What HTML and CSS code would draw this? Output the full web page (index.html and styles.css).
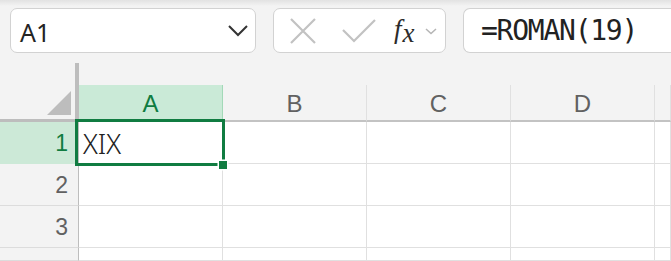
FILE: index.html
```html
<!DOCTYPE html>
<html lang="en">
<head>
  <meta charset="UTF-8" />
  <meta name="viewport" content="width=device-width, initial-scale=1" />
  <title>ROMAN</title>
  <link rel="stylesheet" href="styles.css">
</head>
<body>
  <div class="toolbar">
    <div class="namebox">
      <span class="ref">A1</span>
      <svg class="chev" width="22" height="14" viewBox="0 0 22 14"><path d="M2 2 L11 11 L20 2" /></svg>
    </div>
    <div class="fxbtns">
      <svg class="btn-x" width="26" height="26" viewBox="0 0 26 26"><path d="M1 1 L25 25 M25 1 L1 25" /></svg>
      <svg class="btn-ok" width="34" height="24" viewBox="0 0 34 24"><path d="M1 11 L12 22 L33 1" /></svg>
      <span class="fx">f<span class="fx-x">x</span></span>
      <svg class="chev-sm" width="12" height="7" viewBox="0 0 12 7"><path d="M1 1 L6 5.5 L11 1" /></svg>
    </div>
    <div class="formula">=ROMAN(19)</div>
  </div>

  <div class="sheet">
    <div class="corner"><span class="tri"></span></div>
    <div class="colhead active">A</div>
    <div class="colhead">B</div>
    <div class="colhead">C</div>
    <div class="colhead">D</div>
    <div class="colhead"></div>

    <div class="rowhead active">1</div>
    <div class="cell">XIX</div>
    <div class="cell"></div>
    <div class="cell"></div>
    <div class="cell"></div>
    <div class="cell"></div>

    <div class="rowhead">2</div>
    <div class="cell"></div>
    <div class="cell"></div>
    <div class="cell"></div>
    <div class="cell"></div>
    <div class="cell"></div>

    <div class="rowhead">3</div>
    <div class="cell"></div>
    <div class="cell"></div>
    <div class="cell"></div>
    <div class="cell"></div>
    <div class="cell"></div>

    <div class="rowhead"></div>
    <div class="cell"></div>
    <div class="cell"></div>
    <div class="cell"></div>
    <div class="cell"></div>
    <div class="cell"></div>

    <div class="selection"><span class="handle"></span></div>
  </div>
</body>
</html>
```

FILE: styles.css
```css
body {
  margin: 0;
  background: #f3f3f3;
  font-family: 'Noto Sans', 'Open Sans', sans-serif;
  color: #242424;
  overflow: hidden;
  height: 261px;
  position: relative;
}

body::before {
  content: '';
  position: absolute;
  left: 0;
  right: 0;
  top: 0;
  height: 6px;
  background: linear-gradient(#e2e2e2, #f3f3f3);
}

.toolbar {
  display: flex;
  padding: 8px 0 0 10px;
  box-sizing: border-box;
  height: 63px;
  position: relative;
}

.namebox,
.fxbtns,
.formula {
  height: 45px;
  box-sizing: border-box;
  background: #fff;
  border: 1.5px solid #d2d2d2;
  border-radius: 7px;
  display: flex;
  align-items: center;
  flex: none;
}

.namebox {
  width: 246px;
  padding: 0 6px 0 9px;
  justify-content: space-between;
}

.ref {
  font-size: 25px;
  padding-top: 2px;
}

.chev path {
  fill: none;
  stroke: #333;
  stroke-width: 2;
}

.fxbtns {
  width: 173px;
  margin-left: 17px;
  padding-left: 16px;
}

.btn-x path,
.btn-ok path {
  fill: none;
  stroke: #c2c2c2;
  stroke-width: 2.2;
}

.btn-ok {
  margin-left: 26px;
}

.fx {
  margin-left: 18px;
  font-family: 'Liberation Serif', serif;
  font-style: italic;
  font-size: 27px;
  color: #2b2b2b;
  line-height: 1;
  margin-top: -2px;
}

.fx-x {
  position: relative;
  top: 4px;
  margin-left: 1px;
}

.chev-sm {
  margin-left: 10px;
  margin-top: 2px;
}

.chev-sm path {
  fill: none;
  stroke: #b5b5b5;
  stroke-width: 1.5;
}

.formula {
  flex: 1;
  min-width: 0;
  margin-left: 17px;
  padding-left: 17px;
  border-right: none;
  border-radius: 7px 0 0 7px;
  font-family: 'DejaVu Sans Mono', monospace;
  font-size: 28px;
  letter-spacing: -1.25px;
  color: #222;
}

.sheet {
  display: grid;
  grid-template-columns: 79px repeat(4, 144px) 1fr;
  grid-template-rows: 59px repeat(3, 42px) 13px;
  position: relative;
}

.corner {
  border-right: 4px solid #bdbdbd;
  border-bottom: 3px solid #bdbdbd;
  position: relative;
}

.tri {
  position: absolute;
  right: 4px;
  bottom: 4px;
  width: 0;
  height: 0;
  border-left: 24px solid transparent;
  border-bottom: 24px solid #bdbdbd;
}

.colhead {
  margin-top: 22px;
  border-right: 1px solid #e0e0e0;
  border-bottom: 2px solid #c3c3c3;
  display: flex;
  align-items: center;
  justify-content: center;
  font-family: 'Liberation Sans', sans-serif;
  font-size: 24px;
  color: #616161;
  padding-top: 3px;
}

.colhead.active {
  background: #caead7;
  color: #107c41;
  border-right-color: #a3d9b8;
}

.rowhead {
  border-right: 1px solid #bdbdbd;
  border-bottom: 1px solid #dcdcdc;
  display: flex;
  align-items: center;
  justify-content: flex-end;
  padding-right: 10px;
  font-family: 'Liberation Sans', sans-serif;
  font-size: 23px;
  color: #616161;
  padding-top: 2px;
}

.rowhead.active {
  background: #cce9d7;
  color: #107c41;
  border-bottom-color: #cce9d7;
}

.cell {
  background: #fff;
  border-right: 1px solid #e0e0e0;
  border-bottom: 1px solid #e0e0e0;
  display: flex;
  align-items: center;
  padding-left: 4px;
  font-size: 27px;
  font-weight: 300;
  color: #222;
  padding-top: 2px;
}

.selection {
  position: absolute;
  left: 75px;
  top: 56px;
  width: 150px;
  height: 47px;
  box-sizing: border-box;
  border: 3px solid #107c41;
}

.handle {
  position: absolute;
  right: -5px;
  bottom: -6px;
  width: 8px;
  height: 8px;
  background: #107c41;
  box-shadow: 0 0 0 1.5px #fff;
}
```
